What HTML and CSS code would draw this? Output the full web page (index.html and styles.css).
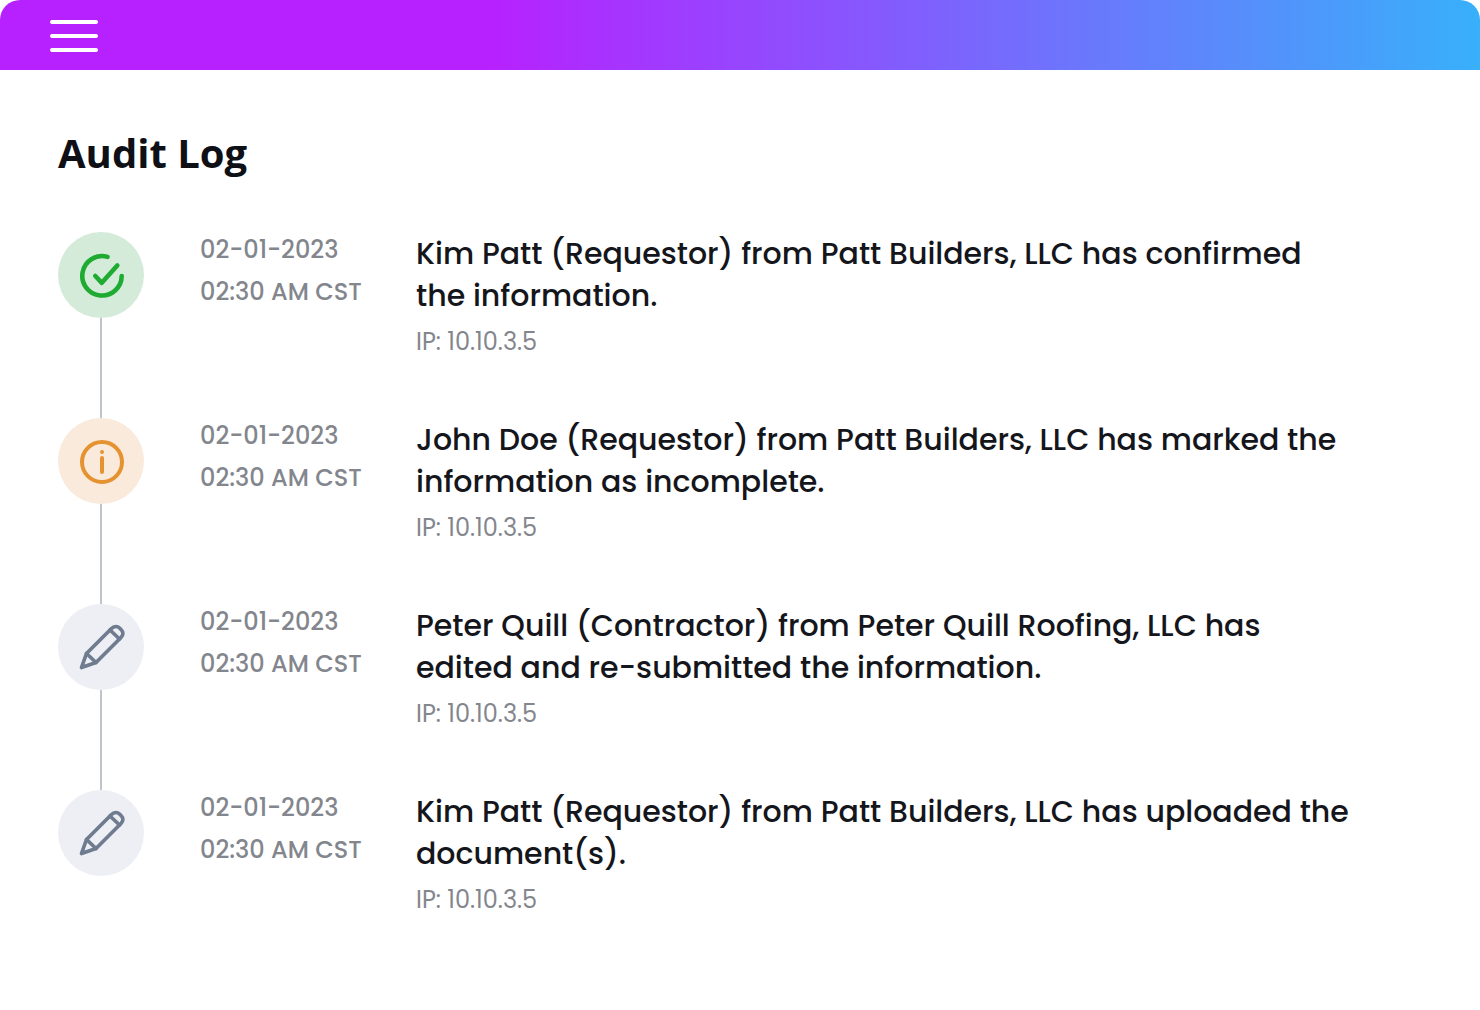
FILE: index.html
```
<!DOCTYPE html>
<html lang="en">

<head>
    <meta charset="utf-8">
    <meta name="viewport" content="width=device-width, initial-scale=1.0">
    <title>Audit Log</title>
    <link rel="stylesheet" href="styles.css">
</head>

<body>

    <header class="topbar">
        <button class="menu_button" type="button" aria-label="Menu">
            <span class="bar"></span>
            <span class="bar"></span>
            <span class="bar"></span>
        </button>
    </header>

    <main>
        <h1>Audit Log</h1>

        <ol class="log">
            <li class="entry">
                <div class="marker">
                    <svg class="badge confirmed" viewBox="0 0 86 86" stroke-width="4.6" aria-hidden="true">
                        <path d="M49.500 24.900A19.700 19.700 0 1 0 63.700 44"/>
                        <path d="M37.300 44L43.800 50.800L59.300 33.500"/>
                    </svg>
                </div>
                <time class="time" datetime="2023-02-01T02:30">02-01-2023<br>02:30 AM CST</time>
                <div class="info">
                    <p class="message">Kim Patt (Requestor) from Patt Builders, LLC has confirmed the information.</p>
                    <p class="ip">IP: 10.10.3.5</p>
                </div>
            </li>

            <li class="entry">
                <div class="marker">
                    <svg class="badge incomplete" viewBox="0 0 86 86" stroke-width="4" aria-hidden="true">
                        <circle cx="44" cy="44" r="20"/>
                        <path d="M44 40V54M44 34V34.010"/>
                    </svg>
                </div>
                <time class="time" datetime="2023-02-01T02:30">02-01-2023<br>02:30 AM CST</time>
                <div class="info">
                    <p class="message">John Doe (Requestor) from Patt Builders, LLC has marked the information as incomplete.</p>
                    <p class="ip">IP: 10.10.3.5</p>
                </div>
            </li>

            <li class="entry">
                <div class="marker">
                    <svg class="badge edited" viewBox="0 0 86 86" stroke-width="3.7" aria-hidden="true">
                        <path d="M23.500 63.500L28.500 49.500L53.500 24.500C56 22 59.500 22 61.500 24L63 25.500C65.500 28 65.500 31 63 33.500L38 58.500Z"/>
                        <path d="M28.500 49.500L38 58.500M52 26L61.500 35"/>
                    </svg>
                </div>
                <time class="time" datetime="2023-02-01T02:30">02-01-2023<br>02:30 AM CST</time>
                <div class="info">
                    <p class="message">Peter Quill (Contractor) from Peter Quill Roofing, LLC has edited and re-submitted the information.</p>
                    <p class="ip">IP: 10.10.3.5</p>
                </div>
            </li>

            <li class="entry">
                <div class="marker">
                    <svg class="badge edited" viewBox="0 0 86 86" stroke-width="3.7" aria-hidden="true">
                        <path d="M23.500 63.500L28.500 49.500L53.500 24.500C56 22 59.500 22 61.500 24L63 25.500C65.500 28 65.500 31 63 33.500L38 58.500Z"/>
                        <path d="M28.500 49.500L38 58.500M52 26L61.500 35"/>
                    </svg>
                </div>
                <time class="time" datetime="2023-02-01T02:30">02-01-2023<br>02:30 AM CST</time>
                <div class="info">
                    <p class="message">Kim Patt (Requestor) from Patt Builders, LLC has uploaded the document(s).</p>
                    <p class="ip">IP: 10.10.3.5</p>
                </div>
            </li>
        </ol>
    </main>

</body>

</html>
```
FILE: styles.css
```
* {
    box-sizing: border-box;
}

body {
    margin: 0;
    background-color: #ffffff;
    color: #14161c;
    font-family: Poppins, Inter, sans-serif;
}

.topbar {
    display: flex;
    align-items: center;
    height: 70px;
    padding: 2px 50px 0;
    border-radius: 20px 20px 0 0;
    background: linear-gradient(90deg, #b721ff 33%, #38b0fa 100%);
}

.menu_button {
    display: flex;
    flex-direction: column;
    gap: 10px;
    width: 48px;
    padding: 0;
    border: none;
    background: none;
    cursor: pointer;
}

.bar {
    height: 4px;
    border-radius: 2px;
    background-color: #ffffff;
}

main {
    padding: 55px 126px 32px 58px;
}

h1 {
    margin: 0 0 51px;
    color: #0e1016;
    font-family: "Open Sans", sans-serif;
    font-size: 40px;
    line-height: 56px;
}

.log {
    margin: 0;
    padding: 0;
    list-style: none;
}

.entry {
    display: grid;
    grid-template-columns: 142px 216px 1fr;
    min-height: 186px;
}

.marker {
    display: flex;
    flex-direction: column;
    align-items: center;
    width: 86px;
}

/* line down to the next badge */
.entry:not(:last-child) .marker::after {
    content: "";
    flex: 1;
    width: 2px;
    background-color: #bfc3ce;
}

.badge {
    width: 86px;
    height: 86px;
    border-radius: 50%;
    fill: none;
    stroke-linecap: round;
    stroke-linejoin: round;
}

.confirmed {
    background-color: #d4ebda;
    stroke: #1fab31;
}

.incomplete {
    background-color: #f9eadb;
    stroke: #e59331;
}

.edited {
    background-color: #eeeff4;
    stroke: #6f7c8f;
}

.time {
    margin-top: -3px;
    color: #83868d;
    font-size: 24px;
    font-weight: 500;
    line-height: 42px;
}

.info {
    padding-top: 1px;
}

.message {
    margin: 0;
    font-size: 30px;
    font-weight: 500;
    line-height: 42px;
}

.ip {
    margin: 4px 0 0;
    color: #83868d;
    font-size: 24px;
    line-height: 42px;
}
```
